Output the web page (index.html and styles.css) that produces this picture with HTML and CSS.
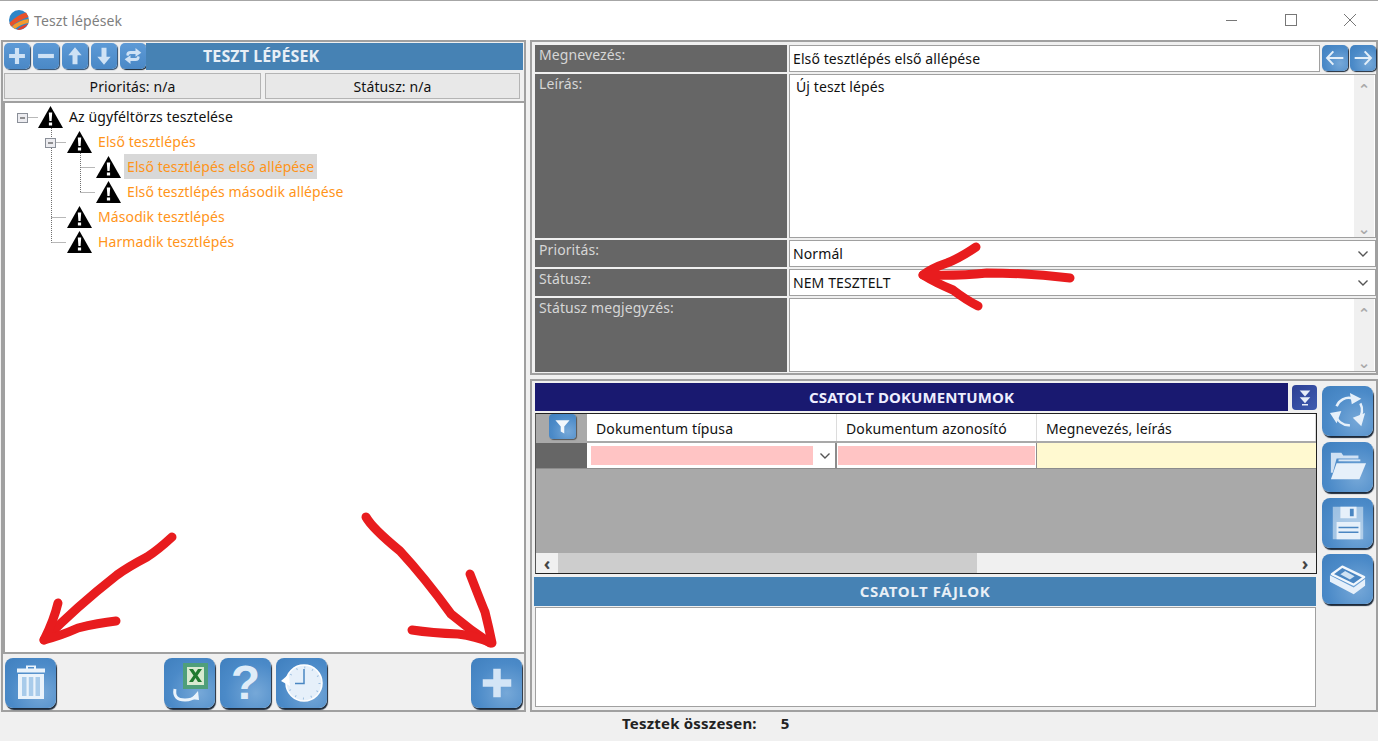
FILE: index.html
```html
<!DOCTYPE html>
<html lang="hu">
<head>
    <meta charset="UTF-8">
    <title>Teszt lépések</title>
    <link rel="stylesheet" href="styles.css">
</head>
<body>
    <svg class="defs" width="0" height="0">
        <defs>
            <symbol id="warn" viewBox="0 0 25 22">
                <path d="M12.5 0 L25 22 L0 22 Z" fill="#000"/>
                <path d="M10.8 6.5 h3.4 l-.6 8.5 h-2.2 Z M10.9 16.4 h3.2 v3.2 h-3.2 Z" fill="#fff"/>
            </symbol>
            <symbol id="plus" viewBox="0 0 24 24">
                <path d="M9.5 2.5 h5 v7 h7 v5 h-7 v7 h-5 v-7 h-7 v-5 h7 Z"/>
            </symbol>
            <symbol id="chev" viewBox="0 0 12 8">
                <path d="M1.5 1.5 L6 6 L10.5 1.5" fill="none" stroke="#555" stroke-width="1.4"/>
            </symbol>
        </defs>
    </svg>

    <div class="titlebar">
        <svg class="logo" viewBox="0 0 20 20">
            <circle cx="10" cy="10" r="10" fill="#2f86c8"/>
            <path d="M0.5 13 Q8 5 17 2.5 L19.5 7 Q10 10 2 16.5 Z" fill="#e8522a"/>
            <path d="M3 16.5 Q10 10 19.8 9 L19.5 13 Q12 14 6 19 Z" fill="#f59a2c"/>
            <path d="M8 19.6 Q13 15 19 14 Q16 19 10 20 Z" fill="#e8402a"/>
        </svg>
        <span class="title-text">Teszt lépések</span>
        <div class="win-controls">
            <svg viewBox="0 0 12 12"><path d="M0 6.5 H11" stroke="#777" fill="none"/></svg>
            <svg viewBox="0 0 12 12"><rect x="0.5" y="0.5" width="11" height="11" stroke="#777" fill="none"/></svg>
            <svg viewBox="0 0 12 12"><path d="M0 0 L12 12 M12 0 L0 12" stroke="#777" fill="none"/></svg>
        </div>
    </div>

    <div class="app">
        <div class="left-panel">
            <div class="left-toolbar">
                <button class="btn btn-sm"><svg class="ico" viewBox="0 0 24 24"><use href="#plus"/></svg></button>
                <button class="btn btn-sm"><svg class="ico" viewBox="0 0 24 24"><path d="M2.5 9.5 h19 v5 h-19 Z"/></svg></button>
                <button class="btn btn-sm"><svg class="ico" viewBox="0 0 24 24"><path d="M12 1.5 L20 11 H15 V22 H9 V11 H4 Z"/></svg></button>
                <button class="btn btn-sm"><svg class="ico" viewBox="0 0 24 24"><path d="M12 22.5 L20 13 H15 V2 H9 V13 H4 Z"/></svg></button>
                <button class="btn btn-sm btn-dark"><svg class="ico" viewBox="0 0 24 24"><path d="M4 11 Q4 6 9 6 H15 V2.5 L22 8 L15 13 V9.5 H9 Q7 9.5 6.5 12 Z M20 13 Q20 18 15 18 H9 V21.5 L2 16 L9 11 V14.5 H15 Q17 14.5 17.5 12 Z"/></svg></button>
                <div class="left-title">TESZT LÉPÉSEK</div>
            </div>
            <div class="status-row">
                <div class="status-cell">Prioritás: n/a</div>
                <div class="status-cell">Státusz: n/a</div>
            </div>
            <div class="tree">
                <!-- connector lines and expander boxes -->
                <svg class="tree-lines" viewBox="0 0 140 150">
                    <path d="M22.5 14.5 H33 M46.5 25 V139.5 M50.5 39.5 H61 M46.5 114.5 H61 M46.5 139.5 H61 M75.5 50 V89.5 M75.5 64.5 H90 M75.5 89.5 H90" stroke="#707070" stroke-dasharray="1 1" fill="none"/>
                    <rect x="12.5" y="10.5" width="10" height="9" fill="#ececf0" stroke="#8a8f98"/>
                    <path d="M15 15 H20" stroke="#333"/>
                    <rect x="40.5" y="35.5" width="10" height="9" fill="#ececf0" stroke="#8a8f98"/>
                    <path d="M43 40 H48" stroke="#333"/>
                </svg>
                <div class="tree-row lvl-0"><svg class="warn"><use href="#warn"/></svg><span class="node root">Az ügyféltörzs tesztelése</span></div>
                <div class="tree-row lvl-1"><svg class="warn"><use href="#warn"/></svg><span class="node">Első tesztlépés</span></div>
                <div class="tree-row lvl-2"><svg class="warn"><use href="#warn"/></svg><span class="node selected">Első tesztlépés első allépése</span></div>
                <div class="tree-row lvl-2"><svg class="warn"><use href="#warn"/></svg><span class="node">Első tesztlépés második allépése</span></div>
                <div class="tree-row lvl-1"><svg class="warn"><use href="#warn"/></svg><span class="node">Második tesztlépés</span></div>
                <div class="tree-row lvl-1"><svg class="warn"><use href="#warn"/></svg><span class="node">Harmadik tesztlépés</span></div>
            </div>
            <div class="left-footer">
                <button class="btn btn-lg">
                    <svg class="ico ico-full" viewBox="0 0 50 50">
                        <path d="M20 7.5 h10 v3 h9 v4 H11 v-4 h9 Z M22 9 v1.500 h6 V9 Z" fill-rule="evenodd" fill="#eaf3fb"/>
                        <path d="M12 16 h26 v25 H12 Z" fill="#eaf3fb"/>
                        <path d="M16 19 h4.500 v19 H16 Z M22.800 19 h4.500 v19 h-4.500 Z M29.500 19 H34 v19 h-4.500 Z" fill="#a8cbea"/>
                    </svg>
                </button>
                <div class="footer-mid">
                    <button class="btn btn-lg">
                        <svg class="ico ico-full" viewBox="0 0 50 50">
                            <rect x="18" y="5" width="25" height="26" fill="#4f9f7a"/>
                            <rect x="22" y="9" width="17" height="18" fill="#d8ead0"/>
                            <path d="M24 11 h4 l2.500 3.800 L33 11 h4 l-4.500 6.500 4.500 6.500 h-4 l-2.500 -4 -2.500 4 h-4 l4.500 -6.500 Z" fill="#1f7a2e"/>
                            <path d="M10 31 Q8 42 20 42 Q27 42 31 38" fill="none" stroke="#eaf3fb" stroke-width="3"/>
                            <path d="M33 33 L34 42 L26 41 Z" fill="#eaf3fb"/>
                        </svg>
                    </button>
                    <button class="btn btn-lg btn-text">?</button>
                    <button class="btn btn-lg">
                        <svg class="ico ico-full" viewBox="0 0 50 50">
                            <circle cx="27" cy="25" r="18" fill="#e6f0fa" stroke="#fff" stroke-width="1.500"/>
                            <circle cx="27" cy="25" r="15.500" fill="none" stroke="#9dbfe0" stroke-width="2" stroke-dasharray="1 7.100"/>
                            <path d="M27 11 V25.500 H18" fill="none" stroke="#4a86c2" stroke-width="1.500"/>
                            <path d="M4 23 L12 16 L13 28 Z" fill="#fff"/>
                        </svg>
                    </button>
                </div>
                <button class="btn btn-lg btn-add"><svg class="ico ico-plus" viewBox="0 0 24 24"><use href="#plus"/></svg></button>
            </div>
        </div>

        <div class="right-panel">
            <div class="form-box">
                <div class="lbl">Megnevezés:</div>
                <div class="name-row">
                    <div class="val val-one">Első tesztlépés első allépése</div>
                    <button class="btn btn-nav"><svg class="ico" viewBox="0 0 24 24"><path d="M10 4 L2.500 12 L10 20 M3 12 H22" fill="none" stroke="#e4eff9" stroke-width="2.400"/></svg></button>
                    <button class="btn btn-nav"><svg class="ico" viewBox="0 0 24 24"><path d="M14 4 L21.500 12 L14 20 M21 12 H2" fill="none" stroke="#e4eff9" stroke-width="2.400"/></svg></button>
                </div>
                <div class="lbl">Leírás:</div>
                <div class="val val-multi">
                    <div class="multi-text">Új teszt lépés</div>
                    <div class="vscroll"><span class="tri">⌃</span><span class="tri tri-down">⌄</span></div>
                </div>
                <div class="lbl">Prioritás:</div>
                <div class="val val-one val-select">Normál<svg class="chev"><use href="#chev"/></svg></div>
                <div class="lbl">Státusz:</div>
                <div class="val val-one val-select">NEM TESZTELT<svg class="chev"><use href="#chev"/></svg></div>
                <div class="lbl">Státusz megjegyzés:</div>
                <div class="val val-multi">
                    <div class="multi-text"></div>
                    <div class="vscroll"><span class="tri">⌃</span><span class="tri tri-down">⌄</span></div>
                </div>
            </div>

            <div class="docs-box">
                <div class="docs-main">
                    <div class="docs-head">
                        <div class="docs-title">CSATOLT DOKUMENTUMOK</div>
                        <button class="btn btn-navy">
                            <svg class="ico" viewBox="0 0 24 24"><path d="M5 2 H19 L12 10 Z M5 11 H19 L12 19 Z M8 20 H16 V22 H8 Z"/></svg>
                        </button>
                    </div>
                    <div class="grid">
                        <div class="grid-head">
                            <div class="corner"><button class="btn btn-filter"><svg class="ico" viewBox="0 0 24 24"><path d="M2 3 H22 L14.500 12 V22 L9.500 19 V12 Z"/></svg></button></div>
                            <div class="col col-type">Dokumentum típusa</div>
                            <div class="col col-id">Dokumentum azonosító</div>
                            <div class="col col-name">Megnevezés, leírás</div>
                        </div>
                        <div class="grid-filter">
                            <div class="corner-dark"></div>
                            <div class="col-type cell-type"><div class="pink"></div><svg class="chev"><use href="#chev"/></svg></div>
                            <div class="col-id cell-pad"><div class="pink"></div></div>
                            <div class="col-name cell-yellow"></div>
                        </div>
                        <div class="grid-body"></div>
                        <div class="hscroll">
                            <span class="arrow">‹</span>
                            <div class="track"><div class="thumb"></div></div>
                            <span class="arrow">›</span>
                        </div>
                    </div>
                    <div class="files-title">CSATOLT FÁJLOK</div>
                    <div class="files-box"></div>
                </div>
                <div class="docs-side">
                    <button class="btn btn-lg">
                        <svg class="ico ico-lg" viewBox="0 0 40 40">
                            <g fill="none" stroke="#e6f0fa" stroke-width="2.600">
                                <path d="M8 15 A14 14 0 0 1 24 6.500"/>
                                <path d="M33 12 A15 15 0 0 1 31 29"/>
                                <path d="M7 23 A14 14 0 0 0 22 35"/>
                            </g>
                            <path d="M22 1 L34 7 L24 13 Z M38 22 L34 36 L25 27 Z M1 22 L13 20 L8 33 Z"/>
                        </svg>
                    </button>
                    <button class="btn btn-lg">
                        <svg class="ico ico-lg" viewBox="0 0 40 40">
                            <path d="M2 5 H13 L15 8 H31 V11 H8 L4 26 H2 Z" opacity=".85"/>
                            <path d="M10 12 H33 V14 H10 Z" opacity=".9"/>
                            <path d="M8 16 H39 L32 33 H2 Z"/>
                        </svg>
                    </button>
                    <button class="btn btn-lg">
                        <svg class="ico ico-lg" viewBox="0 0 40 40">
                            <path opacity=".55" d="M4 3 H36 V37 H4 Z"/>
                            <path d="M12 3 H29 V15 H12 Z M8 19 H33 V37 H8 Z"/>
                            <path d="M22 5 H26 V13 H22 Z M10 24 H31 V25.500 H10 Z M10 29 H31 V30.500 H10 Z" fill="#4a86c2"/>
                        </svg>
                    </button>
                    <button class="btn btn-lg">
                        <svg class="ico ico-lg" viewBox="0 0 40 40">
                            <path d="M1 16 V23 L26 36 L38 27 V20 L26 29 Z"/>
                            <path d="M3 15 L14 7 L37 18 L26 26 Z" fill="#4a86c2" stroke="#f2f7fc" stroke-width="2.400" stroke-linejoin="round"/>
                            <path d="M12 15 L17 11.500 L27 17 L22 20.500 Z" fill="#cfe2f3"/>
                        </svg>
                    </button>
                </div>
            </div>
        </div>
    </div>

    <div class="statusbar">
        <span>Tesztek összesen:</span>
        <span>5</span>
    </div>

    <!-- red marker strokes over the window -->
    <svg class="marks" viewBox="0 0 1378 741">
        <g fill="none" stroke="#e81c1e" stroke-width="9" stroke-linecap="round" stroke-linejoin="round">
            <path d="M172 537 Q158 550 147 557 Q128 567 117 575 Q75 608 44 640"/>
            <path d="M58 603 Q54 620 44 640 Q60 636 78 628 Q98 623 116 621"/>
            <path d="M366 517 Q372 528 400 551 Q425 578 451 614 Q470 630 490 643"/>
            <path d="M470 574 Q482 605 485 612 Q489 628 492 643 Q475 636 458 634 Q432 633 412 630"/>
            <path d="M976 247 Q960 258 947 263 Q932 268 923 275 Q936 283 953 290 Q966 300 978 306"/>
            <path d="M923 275 Q960 276 987 273 Q1030 273 1070 278"/>
        </g>
    </svg>
</body>
</html>
```

FILE: styles.css
```css
* {
    box-sizing: border-box;
}
html, body {
    margin: 0;
    height: 100%;
}
body {
    width: 1378px;
    height: 741px;
    overflow: hidden;
    position: relative;
    display: flex;
    flex-direction: column;
    background: #f0f0f0;
    font-family: "Noto Sans", "DejaVu Sans", sans-serif;
    font-size: 14px;
    letter-spacing: 0.1px;
    color: #111;
}
.defs {
    position: absolute;
}
.marks {
    position: absolute;
    left: 0;
    top: 0;
    width: 1378px;
    height: 741px;
    pointer-events: none;
}

/* title bar */
.titlebar {
    height: 40px;
    flex: none;
    background: #fff;
    border-top: 1px solid #a6a6a6;
    display: flex;
    align-items: center;
    padding: 0 0 1px 9px;
}
.logo {
    width: 20px;
    height: 20px;
}
.title-text {
    margin-left: 5px;
    color: #808080;
    font-size: 14px;
}
.win-controls {
    margin-left: auto;
    display: flex;
    gap: 47px;
    padding-right: 22px;
}
.win-controls svg {
    width: 12px;
    height: 12px;
}

.app {
    flex: 1;
    display: flex;
    gap: 4px;
    padding-left: 1px;
    min-height: 0;
}

/* buttons */
.btn {
    border: none;
    padding: 0;
    margin: 0;
    display: flex;
    align-items: center;
    justify-content: center;
    flex: none;
    font-family: inherit;
    background: radial-gradient(ellipse at 70% 70%, #76a8d8 0%, #4b8ac8 60%, #3f7fbe 100%);
    border-radius: 6px;
    box-shadow: 1px 2px 1px #1d2a3a;
}
.ico {
    width: 20px;
    height: 20px;
    fill: #cfe2f5;
}
.btn-sm {
    width: 26px;
    height: 26px;
    border-radius: 5px;
    box-shadow: 1px 1px 1px #2c4a6b;
    background: linear-gradient(#5d9ad6, #4a88c6);
}
.btn-dark {
    box-shadow: 1px 1px 1px #10202f;
}
.btn-lg {
    width: 51px;
    height: 50px;
    border-radius: 8px;
}
.ico-lg {
    width: 38px;
    height: 38px;
    fill: #e6f0fa;
}
.ico-full {
    width: 50px;
    height: 50px;
}
.ico-plus {
    width: 36px;
    height: 36px;
    fill: #d4e5f6;
}
.btn-text {
    color: #dfecf8;
    font-family: "Liberation Sans", sans-serif;
    font-size: 48px;
    font-weight: 700;
    line-height: 1;
}
.btn-add {
    margin-left: auto;
}
.btn-nav {
    width: 26px;
    height: 26px;
    border-radius: 5px;
    box-shadow: 1px 1px 1px #1d2a3a;
}
.btn-navy {
    width: 25px;
    height: 25px;
    margin: 2px 0 0 4px;
    background: linear-gradient(135deg, #2c3f94, #3f5cb0);
    border-radius: 4px;
    box-shadow: none;
}
.btn-navy .ico {
    fill: #e8eef8;
    width: 18px;
    height: 18px;
}
.btn-filter {
    width: 27px;
    height: 25px;
    border-radius: 4px;
    box-shadow: 1px 1px 1px #555;
}
.btn-filter .ico {
    fill: #f2f7fc;
    width: 17px;
    height: 17px;
}

/* left side */
.left-panel {
    width: 525px;
    height: 672px;
    flex: none;
    border: 2px solid #a0a0a0;
    display: flex;
    flex-direction: column;
}
.left-toolbar {
    display: flex;
    gap: 3px;
    height: 27px;
    margin: 1px 0 0 1px;
    padding-right: 1px;
}
.left-title {
    flex: 1;
    margin-left: -3px;
    background: #4682b4;
    color: #e8eff6;
    font-weight: 700;
    font-size: 16px;
    line-height: 27px;
    padding-left: 57px;
}
.status-row {
    display: flex;
    gap: 4px;
    margin: 3px 4px 0 1px;
    height: 26px;
}
.status-cell {
    flex: none;
    width: 257px;
    border: 1px solid #b4b4b4;
    background: #e8e8e8;
    text-align: center;
    line-height: 25px;
}
.status-cell + .status-cell {
    flex: 1;
}
.tree {
    flex: 1;
    position: relative;
    margin-top: 2px;
    border: 2px solid #a0a0a0;
    border-right-width: 0;
    background: #fff;
    padding-top: 1px;
}
.tree-lines {
    position: absolute;
    left: 0;
    top: 0;
    width: 140px;
    height: 150px;
}
.tree-row {
    height: 25px;
    display: flex;
    align-items: center;
    position: relative;
}
.lvl-0 {
    padding-left: 33px;
}
.lvl-1 {
    padding-left: 62px;
}
.lvl-2 {
    padding-left: 91px;
}
.warn {
    width: 25px;
    height: 22px;
    flex: none;
    margin-top: 1px;
}
.node {
    color: #ff9419;
    padding: 0 3px;
    margin-left: 3px;
    height: 25px;
    line-height: 25px;
}
.node.root {
    color: #111;
}
.node.selected {
    background: #d8d8d8;
}
.left-footer {
    height: 56px;
    flex: none;
    display: flex;
    padding: 4px 2px 0 2px;
}
.footer-mid {
    display: flex;
    gap: 5px;
    margin-left: 108px;
}

/* right side */
.right-panel {
    flex: 1;
    min-width: 0;
    display: flex;
    flex-direction: column;
    gap: 4px;
    height: 672px;
}
.form-box {
    height: 335px;
    border: 2px solid #a0a0a0;
    padding: 3px 0 0 3px;
    display: grid;
    grid-template-columns: 252px 1fr;
    grid-template-rows: 27px 164px 27px 27px 74px;
    gap: 2px;
}
.lbl {
    background: #666;
    color: #d6d6d6;
    padding-left: 4px;
    line-height: 20px;
}
.name-row {
    display: flex;
    gap: 2px;
}
.name-row .val {
    flex: 1;
}
.val {
    background: #fff;
    border: 1px solid #a0a0a0;
    min-width: 0;
}
.val-one {
    padding-left: 3px;
    line-height: 26px;
}
.val-select {
    display: flex;
    justify-content: space-between;
    align-items: center;
    padding-right: 6px;
}
.chev {
    width: 12px;
    height: 8px;
    flex: none;
}
.val-multi {
    display: flex;
}
.multi-text {
    flex: 1;
    padding: 2px 6px;
    line-height: 20px;
}
.vscroll {
    width: 20px;
    background: #f0f0f0;
    margin-right: 1px;
    display: flex;
    flex-direction: column;
    justify-content: space-between;
    align-items: center;
    color: #aaa;
    font-weight: 700;
    font-size: 15px;
    line-height: 18px;
}
.tri {
    height: 18px;
    padding-top: 5px;
}
.tri-down {
    padding-top: 0;
}

.docs-box {
    flex: 1;
    min-height: 0;
    border: 2px solid #a0a0a0;
    padding: 2px 0 0 3px;
    display: flex;
}
.docs-main {
    width: 782px;
    flex: none;
    display: flex;
    flex-direction: column;
}
.docs-head {
    display: flex;
    height: 28px;
    flex: none;
}
.docs-title {
    flex: 1;
    background: #191970;
    color: #eef;
    font-weight: 700;
    font-size: 15px;
    text-align: center;
    line-height: 28px;
}
.grid {
    margin-top: 2px;
    height: 161px;
    flex: none;
    border: 1px solid #222;
    border-left-color: #555;
    display: flex;
    flex-direction: column;
    background: #a9a9a9;
}
.grid-head {
    display: flex;
    height: 27px;
    flex: none;
    background: #fff;
}
.corner {
    width: 51px;
    flex: none;
    background: #a9a9a9;
    padding-left: 13px;
}
.corner-dark {
    width: 51px;
    flex: none;
    background: #666;
}
.col {
    padding-left: 9px;
    line-height: 29px;
    border-right: 1px solid #dcdcdc;
}
.col-type {
    width: 250px;
    flex: none;
}
.col-id {
    width: 200px;
    flex: none;
}
.col-name {
    flex: 1;
}
.grid-filter {
    display: flex;
    height: 26px;
    flex: none;
    margin-top: 2px;
    border-bottom: 1px solid #8c8c8c;
}
.cell-type {
    background: #fff;
    border-right: 2px solid #8c8c8c;
    display: flex;
    align-items: center;
    padding: 0 4px;
    gap: 6px;
}
.cell-pad {
    background: #fff;
    padding: 3px 1px;
    border-right: 1px solid #8c8c8c;
}
.pink {
    background: #ffc4c4;
    height: 100%;
    flex: 1;
}
.cell-type .pink {
    height: 19px;
}
.cell-yellow {
    background: #fff9d0;
}
.grid-body {
    flex: 1;
}
.hscroll {
    height: 20px;
    flex: none;
    background: #f0f0f0;
    display: flex;
    align-items: center;
}
.arrow {
    width: 22px;
    flex: none;
    text-align: center;
    font-weight: 700;
    font-size: 18px;
    line-height: 18px;
    color: #444;
}
.track {
    flex: 1;
    height: 100%;
}
.thumb {
    width: 419px;
    height: 100%;
    background: #cdcdcd;
}
.files-title {
    margin: 3px 1px 0 -1px;
    height: 29px;
    flex: none;
    background: #4682b4;
    color: #e8eff6;
    font-weight: 700;
    font-size: 15px;
    letter-spacing: 0.6px;
    text-align: center;
    line-height: 29px;
}
.files-box {
    margin: 1px 1px 0 0;
    height: 100px;
    flex: none;
    background: #fff;
    border: 1px solid #a0a0a0;
}
.docs-side {
    display: flex;
    flex-direction: column;
    gap: 6px;
    padding: 3px 0 0 5px;
}

.statusbar {
    height: 29px;
    flex: none;
    display: flex;
    align-items: center;
    gap: 24px;
    padding: 0 0 7px 622px;
    font-weight: 700;
    font-size: 15px;
    letter-spacing: 0.2px;
    color: #222;
}
```
